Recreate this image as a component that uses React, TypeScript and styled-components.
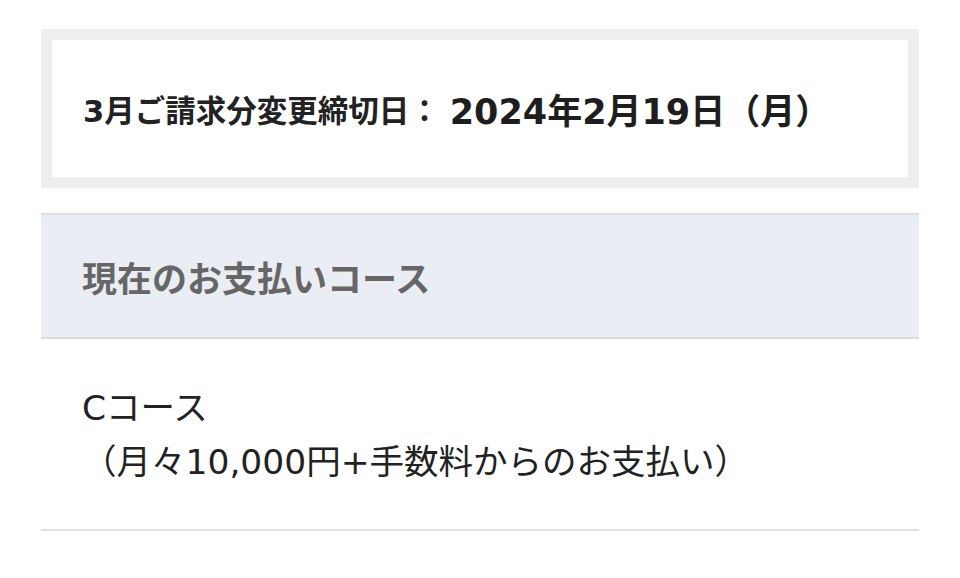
import React from "react";
import styled, { createGlobalStyle } from "styled-components";

const GlobalStyle = createGlobalStyle`
  html, body {
    margin: 0;
    padding: 0;
    background: #ffffff;
  }
  body {
    font-family: "DejaVu Sans", "Noto Sans CJK JP", sans-serif;
    color: #222222;
  }
`;

export const Page = styled.div`
  padding: 29px 41px 0;
`;

export const DeadlineBox = styled.div`
  display: flex;
  align-items: center;
  height: 137px;
  border: 11px solid #eeeeee;
  padding: 0 31px;
  box-sizing: content-box;
`;

export const DeadlineLabel = styled.span`
  font-size: 30.5px;
  font-weight: 700;
  color: #222222;
`;

export const DeadlineDate = styled.span`
  font-size: 35px;
  font-weight: 700;
  color: #1e1e1e;
  margin-left: 10px;
`;

export const Section = styled.section`
  margin-top: 25px;
  border-bottom: 2px solid #e2e2e2;
`;

export const SectionHeader = styled.h2`
  margin: 0;
  display: flex;
  align-items: center;
  height: 122px;
  padding: 0 41px;
  background: #eaedf4;
  border-top: 2px solid #dedfe3;
  border-bottom: 2px solid #dcdcdc;
  font-size: 35px;
  font-weight: 700;
  color: #666666;
`;

export const SectionBody = styled.div`
  padding: 42px 41px 40px;
  font-size: 34.5px;
  line-height: 54px;
  color: #222222;
`;

export const Line = styled.div`
  white-space: nowrap;
`;

export default function App() {
  return (
    <>
      <GlobalStyle />
      <Page>
        <DeadlineBox>
          <DeadlineLabel>3月ご請求分変更締切日：</DeadlineLabel>
          <DeadlineDate>2024年2月19日（月）</DeadlineDate>
        </DeadlineBox>
        <Section>
          <SectionHeader>現在のお支払いコース</SectionHeader>
          <SectionBody>
            <Line>Cコース</Line>
            <Line>（月々10,000円+手数料からのお支払い）</Line>
          </SectionBody>
        </Section>
      </Page>
    </>
  );
}
